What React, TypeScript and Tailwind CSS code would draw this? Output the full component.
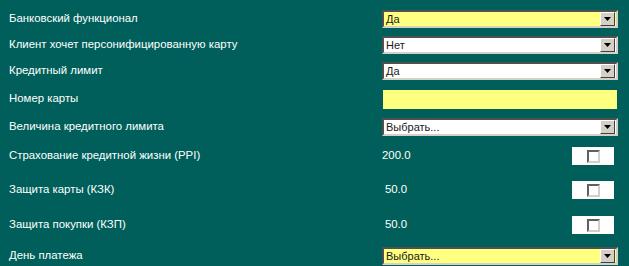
import type { ReactNode } from 'react'

const Select = ({ value, yellow }: { value: string; yellow?: boolean }) => (
  <div
    className={`flex h-[18px] w-[236px] items-center border-2 border-t-[#505050] border-l-[#505050] border-r-[#d4d0c8] border-b-[#d4d0c8] ${
      yellow ? 'bg-[#ffff80]' : 'bg-white'
    }`}
  >
    <span className="flex-1 pl-[2px] text-[11px] leading-none text-[#1a1a1a]">{value}</span>
    <div className="mr-px flex h-[14px] w-[15px] items-center justify-center border border-t-white border-l-white border-r-[#404040] border-b-[#404040] bg-[#d4d0c8]">
      <svg width="7" height="4" viewBox="0 0 7 4">
        <path d="M0 0h7L3.5 4z" fill="#000" />
      </svg>
    </div>
  </div>
)

const Check = () => (
  <div className="ml-auto mr-[15px] flex h-[18px] w-[42px] items-center justify-center bg-white">
    <div className="h-[13px] w-[13px] border-2 border-t-[#606060] border-l-[#606060] border-r-[#d4d0c8] border-b-[#d4d0c8] bg-white" />
  </div>
)

const Row = ({ label, h, children }: { label: string; h: string; children: ReactNode }) => (
  <div className={`flex items-center ${h}`}>
    <div className="w-[382px] pl-[9px] text-[11.4px] text-white">{label}</div>
    <div className="flex flex-1 items-center">{children}</div>
  </div>
)

export default function App() {
  return (
    <div
      className="h-[266px] w-[629px] overflow-hidden bg-[#005f5a] pt-[6px]"
      style={{ fontFamily: '"Liberation Sans", Arial, sans-serif' }}
    >
      <Row label="Банковский функционал" h="h-[26px]">
        <Select value="Да" yellow />
      </Row>
      <Row label="Клиент хочет персонифицированную карту" h="h-[26px]">
        <Select value="Нет" />
      </Row>
      <Row label="Кредитный лимит" h="h-[26px]">
        <Select value="Да" />
      </Row>
      <Row label="Номер карты" h="h-[30px]">
        <div className="ml-px h-[19px] w-[234px] bg-[#ffff80]" />
      </Row>
      <Row label="Величина кредитного лимита" h="h-[26px]">
        <Select value="Выбрать..." />
      </Row>
      <Row label="Страхование кредитной жизни (PPI)" h="h-[32px]">
        <span className="w-[28px] text-center text-[11.4px] text-white">200.0</span>
        <Check />
      </Row>
      <Row label="Защита карты (КЗК)" h="h-[36px]">
        <span className="w-[28px] text-center text-[11.4px] text-white">50.0</span>
        <Check />
      </Row>
      <Row label="Защита покупки (КЗП)" h="h-[34px]">
        <span className="w-[28px] text-center text-[11.4px] text-white">50.0</span>
        <Check />
      </Row>
      <Row label="День платежа" h="h-[28px]">
        <Select value="Выбрать..." yellow />
      </Row>
    </div>
  )
}
